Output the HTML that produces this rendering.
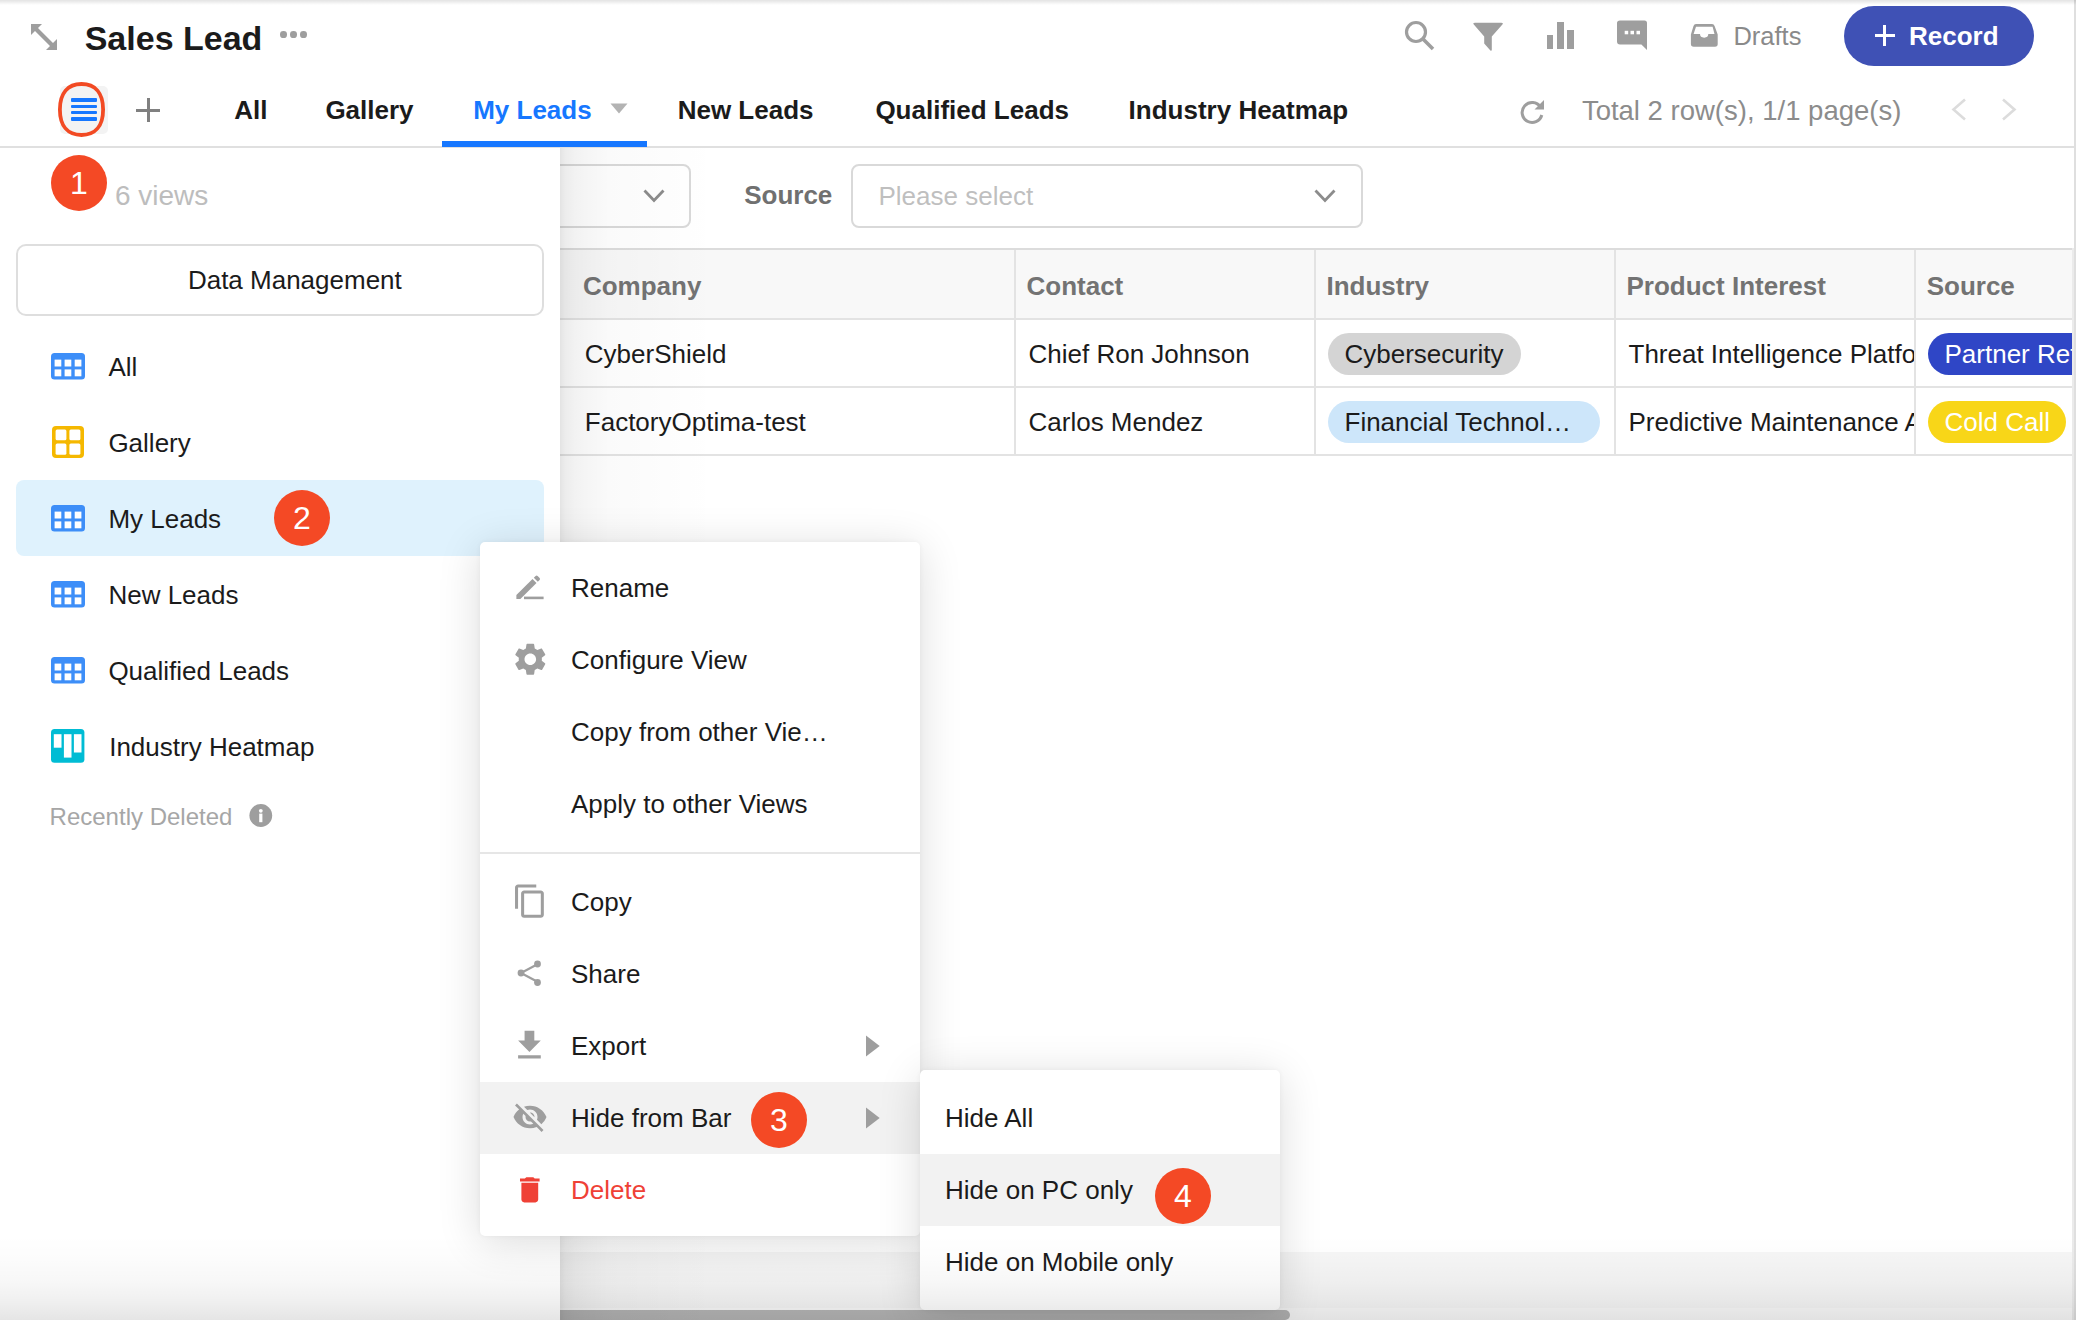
<!DOCTYPE html><html><head><meta charset="utf-8"><style>
html,body{margin:0;padding:0;width:2076px;height:1320px;overflow:hidden;background:#fff;font-family:"Liberation Sans",sans-serif;}
.r{position:absolute;}
.t{position:absolute;white-space:nowrap;}
.badge{background:#f44925;border-radius:50%;color:#fff;font-size:32px;line-height:57px;text-align:center;}
</style></head><body>
<div class="t" style="left:84.70px;top:17.61px;font-size:34px;line-height:41px;color:#1b1b1b;font-weight:bold;">Sales Lead</div>
<svg class="r" style="left:28px;top:20px" width="32" height="34" viewBox="0 0 32 34">
<path d="M3 4 L14 4 L10 8 L25 23 L29 19 L29 30 L18 30 L22 26 L7 11 L3 15 Z" fill="#9e9e9e"/></svg>
<div class="r" style="left:280.2px;top:31.4px;width:6.7px;height:6.7px;background:#9e9e9e;border-radius:50%;"></div>
<div class="r" style="left:290.2px;top:31.4px;width:6.7px;height:6.7px;background:#9e9e9e;border-radius:50%;"></div>
<div class="r" style="left:300.2px;top:31.4px;width:6.7px;height:6.7px;background:#9e9e9e;border-radius:50%;"></div>
<div class="r" style="left:60px;top:86px;width:48px;height:48px;background:#f3f3f3;border-radius:5px;"></div>
<div class="r" style="left:70.7px;top:98.3px;width:26.6px;height:3.4px;background:#1677ff;border-radius:1px;"></div>
<div class="r" style="left:70.7px;top:104.8px;width:26.6px;height:3.4px;background:#1677ff;border-radius:1px;"></div>
<div class="r" style="left:70.7px;top:111px;width:26.6px;height:3.4px;background:#1677ff;border-radius:1px;"></div>
<div class="r" style="left:70.7px;top:117.3px;width:26.6px;height:3.4px;background:#1677ff;border-radius:1px;"></div>
<svg class="r" style="left:55px;top:79px" width="54" height="62"><path d="M26.50 5.00 C40.32 5.00 48.10 14.18 48.10 30.50 C48.10 46.82 40.32 56.00 26.50 56.00 C12.68 56.00 4.90 46.82 4.90 30.50 C4.90 14.18 12.68 5.00 26.50 5.00 Z" fill="none" stroke="#f24a23" stroke-width="3.8"/></svg>
<div class="r" style="left:136px;top:108.5px;width:24px;height:3px;background:#808080;"></div>
<div class="r" style="left:146.5px;top:98px;width:3px;height:24px;background:#808080;"></div>
<div class="t" style="left:234.20px;top:95.29px;font-size:26px;line-height:31px;color:#1b1b1b;font-weight:bold;">All</div>
<div class="t" style="left:325.40px;top:95.29px;font-size:26px;line-height:31px;color:#1b1b1b;font-weight:bold;">Gallery</div>
<div class="t" style="left:677.70px;top:95.29px;font-size:26px;line-height:31px;color:#1b1b1b;font-weight:bold;">New Leads</div>
<div class="t" style="left:875.40px;top:95.29px;font-size:26px;line-height:31px;color:#1b1b1b;font-weight:bold;">Qualified Leads</div>
<div class="t" style="left:1128.60px;top:95.29px;font-size:26px;line-height:31px;color:#1b1b1b;font-weight:bold;">Industry Heatmap</div>
<div class="t" style="left:473.20px;top:95.29px;font-size:26px;line-height:31px;color:#1677ff;font-weight:bold;">My Leads</div>
<svg class="r" style="left:610px;top:103px" width="18" height="11"><path d="M0.5 0.5 L17.5 0.5 L9 10.5 Z" fill="#b3b3b3"/></svg>
<div class="r" style="left:0px;top:146px;width:2076px;height:2px;background:#e0e0e0;"></div>
<div class="r" style="left:442px;top:141px;width:205px;height:6px;background:#1677ff;"></div>
<svg class="r" style="left:1400px;top:15px" width="40" height="40" viewBox="0 0 40 40">
<circle cx="16" cy="17" r="9.5" fill="none" stroke="#9e9e9e" stroke-width="3.2"/>
<path d="M22.5 23.5 L33 34" stroke="#9e9e9e" stroke-width="3.6"/></svg>
<svg class="r" style="left:1470px;top:20px" width="36" height="34" viewBox="0 0 36 34">
<path d="M4.8 2.7 L31.4 2.7 Q33.8 2.7 32.4 4.6 L21.8 16.4 L21.8 29.8 Q21.6 31.4 20.4 30.4 L14.2 23.5 L14.2 16.4 L3.8 4.6 Q2.4 2.7 4.8 2.7 Z" fill="#9e9e9e"/></svg>
<div class="r" style="left:1546.7px;top:35px;width:6.8px;height:13.7px;background:#9e9e9e;"></div>
<div class="r" style="left:1557px;top:22px;width:6.8px;height:26.7px;background:#9e9e9e;"></div>
<div class="r" style="left:1567.2px;top:30.4px;width:6.8px;height:18.3px;background:#9e9e9e;"></div>
<svg class="r" style="left:1615px;top:18px" width="36" height="36" viewBox="0 0 36 36">
<path d="M5 2.4 L29.5 2.4 Q32 2.4 32 5 L32 32 L26.4 26.5 L5 26.5 Q2 26.5 2 23.5 L2 5 Q2 2.4 5 2.4 Z" fill="#9e9e9e"/>
<rect x="9.7" y="12.8" width="3.5" height="3.5" fill="#fff"/><rect x="15.5" y="12.8" width="3.5" height="3.5" fill="#fff"/><rect x="21.5" y="12.8" width="3.5" height="3.5" fill="#fff"/></svg>
<svg class="r" style="left:1688px;top:21px" width="32" height="28" viewBox="0 0 32 28">
<path d="M8 3.1 L24 3.1 Q26 3.1 26.6 5 L29.7 13.5 L29.7 23 Q29.7 25.8 27 25.8 L5.7 25.8 Q2.9 25.8 2.9 23 L2.9 13.5 L5.5 5 Q6.1 3.1 8 3.1 Z" fill="#9e9e9e"/>
<path d="M8 5.8 L24.6 5.8 L26.5 13.1 L20.3 13.1 A4.15 3.6 0 0 1 12 13.1 L5.6 13.1 Z" fill="#fff"/></svg>
<div class="t" style="left:1733.40px;top:21.46px;font-size:25.5px;line-height:31px;color:#8a8a8a;">Drafts</div>
<div class="r" style="left:1844px;top:6px;width:190px;height:60px;background:#3f51b5;border-radius:30px;"></div>
<div class="r" style="left:1874.6px;top:33.8px;width:20.6px;height:3px;background:#fff;"></div>
<div class="r" style="left:1883.4px;top:24.8px;width:3px;height:21px;background:#fff;"></div>
<div class="t" style="left:1909.00px;top:21.29px;font-size:26px;line-height:31px;color:#fff;font-weight:bold;">Record</div>
<svg class="r" style="left:1516px;top:96px" width="32" height="32" viewBox="0 0 32 32">
<path d="M24.5 11 A10 10 0 1 0 25.8 19" fill="none" stroke="#9e9e9e" stroke-width="3"/>
<path d="M28 4 L28 13.5 L18.5 13.5 Z" fill="#9e9e9e"/></svg>
<div class="t" style="left:1581.90px;top:94.17px;font-size:27.5px;line-height:33px;color:#8c8c8c;">Total 2 row(s), 1/1 page(s)</div>
<svg class="r" style="left:1948px;top:96px" width="80" height="28" viewBox="0 0 80 28">
<path d="M17 3.5 L5.5 13.5 L17 23.5" fill="none" stroke="#dcdcdc" stroke-width="2.6"/>
<path d="M55 3.5 L66.5 13.5 L55 23.5" fill="none" stroke="#dcdcdc" stroke-width="2.6"/></svg>
<div class="r" style="left:420px;top:164px;width:271px;height:64px;background:#fff;border:2px solid #d9d9d9;border-radius:8px;box-sizing:border-box;"></div>
<svg class="r" style="left:642px;top:188px" width="24" height="16"><path d="M2.5 2.5 L12 12.5 L21.5 2.5" fill="none" stroke="#8c8c8c" stroke-width="2.8"/></svg>
<div class="t" style="left:744.20px;top:180.29px;font-size:26px;line-height:31px;color:#707070;font-weight:bold;">Source</div>
<div class="r" style="left:851px;top:164px;width:512px;height:64px;background:#fff;border:2px solid #d9d9d9;border-radius:8px;box-sizing:border-box;"></div>
<div class="t" style="left:878.50px;top:180.69px;font-size:26px;line-height:31px;color:#bfbfbf;">Please select</div>
<svg class="r" style="left:1313px;top:188px" width="24" height="16"><path d="M2.5 2.5 L12 12.5 L21.5 2.5" fill="none" stroke="#8c8c8c" stroke-width="2.8"/></svg>
<div class="r" style="left:420px;top:248px;width:1652px;height:2px;background:#dcdcdc;"></div>
<div class="r" style="left:420px;top:250px;width:1652px;height:68px;background:#f8f8f8;"></div>
<div class="r" style="left:420px;top:318px;width:1652px;height:2px;background:#e3e3e3;"></div>
<div class="r" style="left:420px;top:386px;width:1652px;height:2px;background:#e3e3e3;"></div>
<div class="r" style="left:420px;top:454px;width:1652px;height:2px;background:#e3e3e3;"></div>
<div class="r" style="left:1014px;top:250px;width:2px;height:204px;background:#e3e3e3;"></div>
<div class="r" style="left:1314px;top:250px;width:2px;height:204px;background:#e3e3e3;"></div>
<div class="r" style="left:1614px;top:250px;width:2px;height:204px;background:#e3e3e3;"></div>
<div class="r" style="left:1914px;top:250px;width:2px;height:204px;background:#e3e3e3;"></div>
<div class="t" style="left:582.90px;top:270.89px;font-size:26px;line-height:31px;color:#737373;font-weight:bold;">Company</div>
<div class="t" style="left:1026.50px;top:270.89px;font-size:26px;line-height:31px;color:#737373;font-weight:bold;">Contact</div>
<div class="t" style="left:1326.50px;top:270.89px;font-size:26px;line-height:31px;color:#737373;font-weight:bold;">Industry</div>
<div class="t" style="left:1626.50px;top:270.89px;font-size:26px;line-height:31px;color:#737373;font-weight:bold;">Product Interest</div>
<div class="t" style="left:1926.70px;top:270.89px;font-size:26px;line-height:31px;color:#737373;font-weight:bold;">Source</div>
<div class="t" style="left:584.80px;top:338.79px;font-size:26px;line-height:31px;color:#1b1b1b;">CyberShield</div>
<div class="t" style="left:584.80px;top:406.99px;font-size:26px;line-height:31px;color:#1b1b1b;">FactoryOptima-test</div>
<div class="t" style="left:1028.50px;top:338.79px;font-size:26px;line-height:31px;color:#1b1b1b;">Chief Ron Johnson</div>
<div class="t" style="left:1028.50px;top:406.99px;font-size:26px;line-height:31px;color:#1b1b1b;">Carlos Mendez</div>
<div class="r" style="left:1328px;top:333px;width:193px;height:42px;background:#d4d4d4;border-radius:21px;"></div>
<div class="t" style="left:1344.50px;top:338.79px;font-size:26px;line-height:31px;color:#1b1b1b;">Cybersecurity</div>
<div class="r" style="left:1328px;top:401px;width:272px;height:42px;background:#cde6fa;border-radius:21px;"></div>
<div class="t" style="left:1344.50px;top:406.99px;font-size:26px;line-height:31px;color:#1b1b1b;">Financial Technol…</div>
<div class="r" style="left:1616px;top:320px;width:298px;height:134px;overflow:hidden">
<div class="t" style="left:12.50px;top:18.79px;font-size:26px;line-height:31px;color:#1b1b1b;">Threat Intelligence Platform</div>
<div class="t" style="left:12.50px;top:86.99px;font-size:26px;line-height:31px;color:#1b1b1b;">Predictive Maintenance AI</div>
</div>
<div class="r" style="left:1916px;top:320px;width:156px;height:134px;overflow:hidden">
<div class="r" style="left:12px;top:13px;width:200px;height:42px;background:#2f46c6;border-radius:21px;"></div>
<div class="t" style="left:28.50px;top:18.79px;font-size:26px;line-height:31px;color:#fff;">Partner Referral</div>
<div class="r" style="left:12px;top:81px;width:138px;height:42px;background:#f8d618;border-radius:21px;"></div>
<div class="t" style="left:28.50px;top:86.99px;font-size:26px;line-height:31px;color:#fff;">Cold Call</div>
</div>
<div class="r" style="left:560px;top:1252px;width:1512px;height:56px;background:#f6f6f6;"></div>
<div class="r" style="left:560px;top:1308px;width:1512px;height:12px;background:#fbfbfb;"></div>
<div class="r" style="left:560px;top:1310px;width:730px;height:10px;background:#b6b6b6;border-radius:0 5px 5px 0;"></div>
<div class="r" style="left:2072px;top:248px;width:2px;height:1072px;background:#ebebeb;"></div>
<div class="r" style="left:2074px;top:0px;width:2px;height:1320px;background:#dfdfdf;"></div>
<div class="r" style="left:0;top:148px;width:560px;height:1172px;background:#fff;"></div>
<div class="r" style="left:560px;top:148px;width:160px;height:1172px;background:linear-gradient(to right,rgba(0,0,0,0.11) 0px,rgba(0,0,0,0.075) 5px,rgba(0,0,0,0.05) 15px,rgba(0,0,0,0.034) 30px,rgba(0,0,0,0.02) 50px,rgba(0,0,0,0.011) 90px,rgba(0,0,0,0.004) 130px,rgba(0,0,0,0) 160px);"></div>
<div class="r badge" style="left:51.0px;top:155.0px;width:56px;height:56px;">1</div>
<div class="t" style="left:114.90px;top:178.89px;font-size:28px;line-height:34px;color:#bdbdbd;">6 views</div>
<div class="r" style="left:16px;top:244px;width:528px;height:72px;background:#fff;border:2px solid #dedede;border-radius:10px;box-sizing:border-box;"></div>
<div class="t" style="left:187.90px;top:264.99px;font-size:26px;line-height:31px;color:#1b1b1b;">Data Management</div>
<div class="r" style="left:16px;top:480px;width:528px;height:76px;background:#dff2fd;border-radius:8px;"></div>
<svg class="r" style="left:51px;top:352.6px" width="34" height="27" viewBox="0 0 34 27">
<rect x="0" y="0" width="34" height="26.6" rx="3.5" fill="#3d8ef8"/>
<rect x="3.6" y="6.6" width="6.7" height="6.9" fill="#fff"/><rect x="13.6" y="6.6" width="6.7" height="6.9" fill="#fff"/><rect x="23.7" y="6.6" width="6.7" height="6.9" fill="#fff"/>
<rect x="3.6" y="16.4" width="6.7" height="6.9" fill="#fff"/><rect x="13.6" y="16.4" width="6.7" height="6.9" fill="#fff"/><rect x="23.7" y="16.4" width="6.7" height="6.9" fill="#fff"/></svg>
<div class="t" style="left:108.40px;top:352.29px;font-size:26px;line-height:31px;color:#1b1b1b;">All</div>
<svg class="r" style="left:52px;top:426px" width="32" height="32" viewBox="0 0 32 32">
<rect x="0" y="0" width="32" height="32" rx="4" fill="#f5b800"/>
<rect x="3.6" y="3.5" width="10.8" height="10.8" rx="1.5" fill="#fff"/><rect x="17.4" y="3.5" width="11" height="10.8" rx="1.5" fill="#fff"/>
<rect x="3.6" y="17.4" width="10.8" height="11.4" rx="1.5" fill="#fff"/><rect x="17.4" y="17.4" width="11" height="11.4" rx="1.5" fill="#fff"/></svg>
<div class="t" style="left:108.40px;top:428.29px;font-size:26px;line-height:31px;color:#1b1b1b;">Gallery</div>
<svg class="r" style="left:51px;top:504.6px" width="34" height="27" viewBox="0 0 34 27">
<rect x="0" y="0" width="34" height="26.6" rx="3.5" fill="#3d8ef8"/>
<rect x="3.6" y="6.6" width="6.7" height="6.9" fill="#fff"/><rect x="13.6" y="6.6" width="6.7" height="6.9" fill="#fff"/><rect x="23.7" y="6.6" width="6.7" height="6.9" fill="#fff"/>
<rect x="3.6" y="16.4" width="6.7" height="6.9" fill="#fff"/><rect x="13.6" y="16.4" width="6.7" height="6.9" fill="#fff"/><rect x="23.7" y="16.4" width="6.7" height="6.9" fill="#fff"/></svg>
<div class="t" style="left:108.40px;top:504.29px;font-size:26px;line-height:31px;color:#1b1b1b;">My Leads</div>
<svg class="r" style="left:51px;top:580.6px" width="34" height="27" viewBox="0 0 34 27">
<rect x="0" y="0" width="34" height="26.6" rx="3.5" fill="#3d8ef8"/>
<rect x="3.6" y="6.6" width="6.7" height="6.9" fill="#fff"/><rect x="13.6" y="6.6" width="6.7" height="6.9" fill="#fff"/><rect x="23.7" y="6.6" width="6.7" height="6.9" fill="#fff"/>
<rect x="3.6" y="16.4" width="6.7" height="6.9" fill="#fff"/><rect x="13.6" y="16.4" width="6.7" height="6.9" fill="#fff"/><rect x="23.7" y="16.4" width="6.7" height="6.9" fill="#fff"/></svg>
<div class="t" style="left:108.40px;top:580.29px;font-size:26px;line-height:31px;color:#1b1b1b;">New Leads</div>
<svg class="r" style="left:51px;top:656.6px" width="34" height="27" viewBox="0 0 34 27">
<rect x="0" y="0" width="34" height="26.6" rx="3.5" fill="#3d8ef8"/>
<rect x="3.6" y="6.6" width="6.7" height="6.9" fill="#fff"/><rect x="13.6" y="6.6" width="6.7" height="6.9" fill="#fff"/><rect x="23.7" y="6.6" width="6.7" height="6.9" fill="#fff"/>
<rect x="3.6" y="16.4" width="6.7" height="6.9" fill="#fff"/><rect x="13.6" y="16.4" width="6.7" height="6.9" fill="#fff"/><rect x="23.7" y="16.4" width="6.7" height="6.9" fill="#fff"/></svg>
<div class="t" style="left:108.40px;top:656.29px;font-size:26px;line-height:31px;color:#1b1b1b;">Qualified Leads</div>
<svg class="r" style="left:51.4px;top:729px" width="34" height="34" viewBox="0 0 34 34">
<rect x="0" y="0" width="33.4" height="33.7" rx="3.5" fill="#00bcd4"/>
<rect x="2.8" y="5.2" width="7.7" height="13.5" fill="#fff"/><rect x="12.9" y="5.2" width="7.6" height="23.4" fill="#fff"/><rect x="22.9" y="5.2" width="7.6" height="18.3" fill="#fff"/></svg>
<div class="t" style="left:109.20px;top:732.29px;font-size:26px;line-height:31px;color:#1b1b1b;">Industry Heatmap</div>
<div class="r badge" style="left:274.0px;top:490.0px;width:56px;height:56px;">2</div>
<div class="t" style="left:49.60px;top:802.28px;font-size:24px;line-height:29px;color:#a6a6a6;">Recently Deleted</div>
<svg class="r" style="left:249px;top:804px" width="24" height="24" viewBox="0 0 24 24">
<circle cx="11.8" cy="11.5" r="11.4" fill="#9e9e9e"/><circle cx="11.8" cy="6.8" r="1.9" fill="#fff"/><rect x="10.2" y="9.6" width="3.2" height="8.6" fill="#fff"/></svg>
<div class="r" style="left:480px;top:542px;width:440px;height:694px;background:#fff;border-radius:5px;box-shadow:0 6px 44px rgba(0,0,0,0.14),0 0 5px rgba(0,0,0,0.05);"></div>
<div class="r" style="left:480px;top:852px;width:440px;height:2px;background:#e6e6e6;"></div>
<div class="r" style="left:480px;top:1082px;width:440px;height:72px;background:#f2f2f2;"></div>
<div class="t" style="left:571.00px;top:572.99px;font-size:26px;line-height:31px;color:#1b1b1b;">Rename</div>
<div class="t" style="left:571.00px;top:644.99px;font-size:26px;line-height:31px;color:#1b1b1b;">Configure View</div>
<div class="t" style="left:571.00px;top:716.99px;font-size:26px;line-height:31px;color:#1b1b1b;">Copy from other Vie…</div>
<div class="t" style="left:571.00px;top:788.99px;font-size:26px;line-height:31px;color:#1b1b1b;">Apply to other Views</div>
<div class="t" style="left:571.00px;top:887.49px;font-size:26px;line-height:31px;color:#1b1b1b;">Copy</div>
<div class="t" style="left:571.00px;top:959.49px;font-size:26px;line-height:31px;color:#1b1b1b;">Share</div>
<div class="t" style="left:571.00px;top:1031.49px;font-size:26px;line-height:31px;color:#1b1b1b;">Export</div>
<div class="t" style="left:571.00px;top:1103.49px;font-size:26px;line-height:31px;color:#1b1b1b;">Hide from Bar</div>
<div class="t" style="left:571.00px;top:1174.99px;font-size:26px;line-height:31px;color:#ef4136;">Delete</div>
<svg class="r" style="left:514px;top:574px" width="32" height="28" viewBox="0 0 32 28">
<path d="M2.4 25 L2.4 21 L18.5 5 L22.5 9 L6.4 25 Z" fill="#9e9e9e"/><path d="M19.8 3.7 L21.6 1.9 Q22.6 1 23.6 1.9 L25.6 3.9 Q26.5 4.9 25.6 5.9 L23.8 7.7 Z" fill="#9e9e9e"/>
<rect x="10" y="22.6" width="19.6" height="2.6" fill="#9e9e9e"/></svg>
<svg class="r" style="left:510.7px;top:640.2px" width="38.6" height="38.6" viewBox="0 0 24 24">
<path fill="#9e9e9e" d="M19.14 12.94c.04-.3.06-.61.06-.94 0-.32-.02-.64-.07-.94l2.03-1.58c.18-.14.23-.41.12-.61l-1.92-3.32c-.12-.22-.37-.29-.59-.22l-2.39.96c-.5-.38-1.03-.7-1.62-.94l-.36-2.54c-.04-.24-.24-.41-.48-.41h-3.84c-.24 0-.43.17-.47.41l-.36 2.54c-.59.24-1.13.57-1.62.94l-2.39-.96c-.22-.08-.47 0-.59.22L2.74 8.87c-.12.21-.08.47.12.61l2.03 1.58c-.05.3-.09.63-.09.94s.02.64.07.94l-2.03 1.58c-.18.14-.23.41-.12.61l1.92 3.32c.12.22.37.29.59.22l2.39-.96c.5.38 1.03.7 1.62.94l.36 2.54c.05.24.24.41.48.41h3.84c.24 0 .44-.17.47-.41l.36-2.54c.59-.24 1.13-.56 1.62-.94l2.39.96c.22.08.47 0 .59-.22l1.92-3.32c.12-.22.07-.47-.12-.61l-2.01-1.58zM12 15.6c-1.98 0-3.6-1.62-3.6-3.6s1.62-3.6 3.6-3.6 3.6 1.62 3.6 3.6-1.62 3.6-3.6 3.6z"/></svg>
<svg class="r" style="left:511.8px;top:883.3px" width="36.4" height="36.4" viewBox="0 0 24 24"><path fill="#9e9e9e" d="M16 1H4c-1.1 0-2 .9-2 2v14h2V3h12V1zm3 4H8c-1.1 0-2 .9-2 2v14c0 1.1.9 2 2 2h11c1.1 0 2-.9 2-2V7c0-1.1-.9-2-2-2zm0 16H8V7h11v14z"/></svg>
<svg class="r" style="left:516px;top:958px" width="28" height="30" viewBox="0 0 28 30">
<path d="M5 15 L21 6.5 M5 15 L21 23.5" stroke="#9e9e9e" stroke-width="2.2"/>
<circle cx="5" cy="15" r="3.4" fill="#9e9e9e"/><circle cx="21.5" cy="6" r="3.4" fill="#9e9e9e"/><circle cx="21.5" cy="24.5" r="3.4" fill="#9e9e9e"/></svg>
<svg class="r" style="left:510.4px;top:1026.3px" width="38.9" height="38.9" viewBox="0 0 24 24"><path fill="#9e9e9e" d="M19 9h-4V3H9v6H5l7 7 7-7zM5 18v2h14v-2H5z"/></svg>
<svg class="r" style="left:864px;top:1034px" width="18" height="24"><path d="M2 1.5 L15.7 12 L2 22.5 Z" fill="#9e9e9e"/></svg>
<svg class="r" style="left:864px;top:1106px" width="18" height="24"><path d="M2 1.5 L15.7 12 L2 22.5 Z" fill="#9e9e9e"/></svg>
<svg class="r" style="left:511.7px;top:1099.4px" width="36" height="36" viewBox="0 0 24 24"><path fill="#9e9e9e" d="M12 7c2.76 0 5 2.24 5 5 0 .65-.13 1.26-.36 1.83l2.92 2.92c1.51-1.26 2.7-2.89 3.43-4.75-1.73-4.39-6-7.5-11-7.5-1.4 0-2.74.25-3.98.7l2.16 2.16C10.74 7.13 11.35 7 12 7zM2 4.27l2.28 2.28.46.46C3.08 8.3 1.78 10.02 1 12c1.73 4.39 6 7.5 11 7.5 1.55 0 3.03-.3 4.38-.84l.42.42L19.73 22 21 20.73 3.27 3 2 4.27zM7.53 9.8l1.55 1.55c-.05.21-.08.43-.08.65 0 1.66 1.34 3 3 3 .22 0 .44-.03.65-.08l1.55 1.55c-.67.33-1.41.53-2.2.53-2.76 0-5-2.24-5-5 0-.79.2-1.53.53-2.2zm4.31-.78l3.15 3.15.02-.16c0-1.66-1.34-3-3-3l-.17.01z"/></svg>
<svg class="r" style="left:513.1px;top:1172.9px" width="33.6" height="33.6" viewBox="0 0 24 24"><path fill="#ef4136" d="M6 19c0 1.1.9 2 2 2h8c1.1 0 2-.9 2-2V7H6v12zM19 4h-3.5l-1-1h-5l-1 1H5v2h14V4z"/></svg>
<div class="r badge" style="left:751.0px;top:1092.0px;width:56px;height:56px;">3</div>
<div class="r" style="left:920px;top:1070px;width:360px;height:240px;background:#fff;border-radius:5px;box-shadow:0 6px 44px rgba(0,0,0,0.14),0 0 5px rgba(0,0,0,0.05);"></div>
<div class="r" style="left:920px;top:1154px;width:360px;height:72px;background:#f2f2f2;"></div>
<div class="t" style="left:945.00px;top:1103.09px;font-size:26px;line-height:31px;color:#1b1b1b;">Hide All</div>
<div class="t" style="left:945.00px;top:1175.09px;font-size:26px;line-height:31px;color:#1b1b1b;">Hide on PC only</div>
<div class="t" style="left:945.00px;top:1246.79px;font-size:26px;line-height:31px;color:#1b1b1b;">Hide on Mobile only</div>
<div class="r badge" style="left:1155.0px;top:1168.0px;width:56px;height:56px;">4</div>
<div class="r" style="left:0;top:0;width:2076px;height:5px;background:linear-gradient(rgba(0,0,0,0.11),rgba(0,0,0,0));"></div>
<div class="r" style="left:0;top:1235px;width:2076px;height:85px;background:linear-gradient(rgba(0,0,0,0) 0px,rgba(0,0,0,0.012) 24px,rgba(0,0,0,0.031) 47px,rgba(0,0,0,0.059) 65px,rgba(0,0,0,0.10) 85px);"></div>
</body></html>
